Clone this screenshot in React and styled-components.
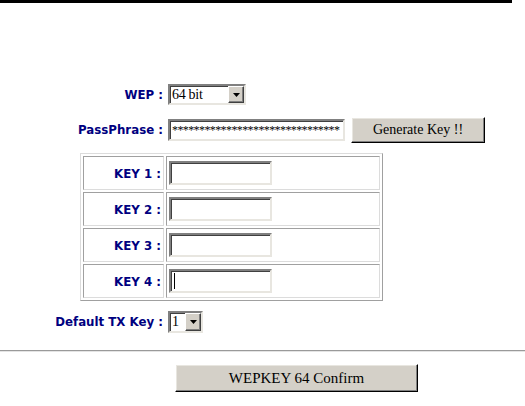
import React from "react";
import styled, { createGlobalStyle } from "styled-components";

const Global = createGlobalStyle`
  html, body { margin: 0; padding: 0; background: #fff; }
  body { font-family: "Liberation Serif", serif; width: 525px; height: 406px; overflow: hidden; }
`;

const TopBar = styled.div`
  width: 512px;
  height: 3px;
  background: #000;
`;

const Form = styled.div`
  display: flex;
  flex-direction: column;
  padding-top: ${(p) => p.$top}px;
`;

const Row = styled.div`
  display: flex;
  align-items: center;
  gap: ${(p) => p.$gap ?? 5}px;
  padding-left: ${(p) => p.$indent ?? 0}px;
  margin-top: ${(p) => p.$mt ?? 0}px;
  height: ${(p) => p.$h}px;
`;

const Label = styled.span`
  font-family: "DejaVu Sans", Verdana, sans-serif;
  font-weight: bold;
  font-size: 11.8px;
  color: #000080;
  white-space: nowrap;
  ${(p) => (p.$w ? `width: ${p.$w}px; text-align: right; flex: none;` : "")}
`;

const sunken = `
  border-style: solid;
  border-width: 2px;
  border-color: #808080 #e8e6e0 #e8e6e0 #808080;
  box-shadow: inset 1px 1px 0 #404040;
`;

const TextBox = styled.div`
  box-sizing: border-box;
  width: ${(p) => p.$w}px;
  height: ${(p) => p.$h}px;
  background: #fff;
  ${sunken}
  font-family: "Liberation Serif", serif;
  font-size: 12px;
  line-height: ${(p) => p.$h - 4}px;
  padding-left: 2px;
  overflow: hidden;
  white-space: nowrap;
  letter-spacing: -0.6px;
  display: flex;
  align-items: center;
`;

const Caret = styled.span`
  display: inline-block;
  width: 1px;
  height: 16px;
  background: #000;
  margin-left: 1px;
`;

const SelectBox = styled.div`
  box-sizing: border-box;
  width: ${(p) => p.$w}px;
  height: ${(p) => p.$h}px;
  background: #fff;
  ${sunken}
  display: flex;
  align-items: stretch;
`;

const SelectValue = styled.span`
  flex: 1;
  font-family: "Liberation Serif", serif;
  font-size: 14px;
  letter-spacing: -0.3px;
  line-height: ${(p) => p.$h - 4}px;
  padding-left: 2px;
  white-space: nowrap;
  overflow: hidden;
`;

const ArrowBtn = styled.span`
  box-sizing: border-box;
  width: 16px;
  flex: none;
  background: #d4d0c8;
  border-style: solid;
  border-width: 1px;
  border-color: #fff #404040 #404040 #fff;
  box-shadow: inset -1px -1px 0 #808080;
  display: flex;
  align-items: center;
  justify-content: center;
`;

const Button = styled.div`
  box-sizing: border-box;
  width: ${(p) => p.$w}px;
  height: ${(p) => p.$h}px;
  background: #d4d0c8;
  border-style: solid;
  border-width: 1px;
  border-color: #fff #000 #000 #fff;
  box-shadow: inset -1px -1px 0 #808080, inset 1px 1px 0 #e8e6e0;
  font-family: "Liberation Serif", serif;
  font-size: ${(p) => p.$fs}px;
  color: #000;
  display: flex;
  align-items: center;
  justify-content: center;
  margin-left: ${(p) => p.$ml ?? 0}px;
  white-space: nowrap;
  flex: none;
`;

const KeyTable = styled.table`
  margin-left: 80px;
  margin-top: 10px;
  width: 303px;
  border-collapse: separate;
  border-spacing: 2px;
  border: 1px solid;
  border-color: #dcdcdc #a0a0a0 #a0a0a0 #dcdcdc;
`;

const Cell = styled.td`
  box-sizing: border-box;
  height: 34px;
  padding: 0 2px;
  border: 1px solid;
  border-color: #a0a0a0 #dcdcdc #dcdcdc #a0a0a0;
  text-align: ${(p) => p.$align ?? "left"};
  width: ${(p) => (p.$w ? `${p.$w}px` : "auto")};
  vertical-align: middle;
`;

const Divider = styled.hr`
  margin: 17px 0 0 0;
  border: 0;
  border-top: 1px solid #9a9a9a;
  border-bottom: 1px solid #e4e4e4;
  height: 0;
  width: 525px;
`;

const Arrow = () => (
  <svg width="7" height="4" viewBox="0 0 7 4">
    <path d="M0 0H7L3.5 4Z" fill="#000" />
  </svg>
);

const Select = ({ w, h, value }) => (
  <SelectBox $w={w} $h={h}>
    <SelectValue $h={h}>{value}</SelectValue>
    <ArrowBtn>
      <Arrow />
    </ArrowBtn>
  </SelectBox>
);

const keys = [1, 2, 3, 4];

export default function App() {
  return (
    <>
      <Global />
      <TopBar />
      <Form $top={81}>
        <Row $h={21}>
          <Label $w={163}>WEP :</Label>
          <Select w={78} h={21} value="64 bit" />
        </Row>
        <Row $h={26} $mt={12}>
          <Label $w={163}>PassPhrase :</Label>
          <TextBox $w={177} $h={22}>{"*".repeat(31)}</TextBox>
          <Button $w={134} $h={26} $fs={14} $ml={1}>Generate Key !!</Button>
        </Row>
        <KeyTable>
          <tbody>
            {keys.map((k) => (
              <tr key={k}>
                <Cell $align="right" $w={81}>
                  <Label>KEY {k} :</Label>
                </Cell>
                <Cell>
                  <TextBox $w={103} $h={24}>{k === 4 ? <Caret /> : null}</TextBox>
                </Cell>
              </tr>
            ))}
          </tbody>
        </KeyTable>
        <Row $h={22} $mt={10}>
          <Label $w={163}>Default TX Key :</Label>
          <Select w={35} h={22} value="1" />
        </Row>
        <Divider />
        <Row $h={28} $mt={12} $indent={175}>
          <Button $w={243} $h={28} $fs={15}>WEPKEY 64 Confirm</Button>
        </Row>
      </Form>
    </>
  );
}
